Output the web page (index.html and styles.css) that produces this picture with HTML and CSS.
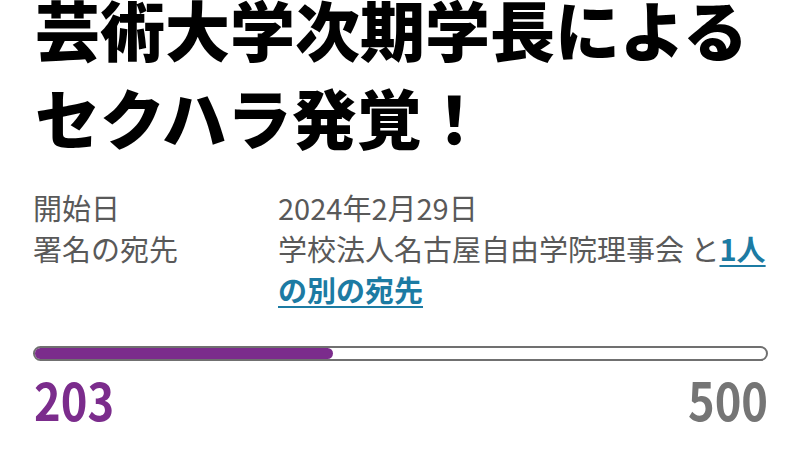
FILE: index.html
```html
<!DOCTYPE html>
<html lang="ja">
<head>
<meta charset="utf-8">
<title>芸術大学次期学長によるセクハラ発覚！</title>
<link rel="stylesheet" href="styles.css">
</head>
<body>
<main class="page">
  <h1 class="title">芸術大学次期学長によるセクハラ発覚！</h1>
  <dl class="info">
    <dt class="label">開始日</dt>
    <dd class="value">2024年2月29日</dd>
    <dt class="label">署名の宛先</dt>
    <dd class="value">学校法人名古屋自由学院理事会 と<a class="link" href="#">1人の別の宛先</a></dd>
  </dl>
  <div class="progress"><div class="progress-fill" style="width:40.8%"></div></div>
  <div class="counts">
    <span class="count-now">203</span>
    <span class="count-goal">500</span>
  </div>
</main>
</body>
</html>
```

FILE: styles.css
```css
html, body {
  margin: 0;
  padding: 0;
  background: #ffffff;
}
body {
  font-family: "Noto Sans CJK JP", "Noto Sans", sans-serif;
  overflow: hidden;
}
.page {
  width: 800px;
  height: 450px;
  box-sizing: border-box;
  padding: 0 32px 0 33px;
}
.title {
  margin: -16px 0 0 2px;
  font-size: 65px;
  line-height: 88px;
  font-weight: 900;
  color: #000000;
}
.info {
  display: grid;
  grid-template-columns: 245px 1fr;
  margin: 27px 0 0 0;
  font-size: 29px;
  line-height: 41px;
  color: #595959;
}
.label {
  margin: 0;
}
.value {
  margin: 0;
}
.link {
  color: #1c7ba3;
  font-weight: 700;
  text-decoration: underline;
  text-decoration-thickness: 2px;
  text-underline-offset: 4px;
}
.progress {
  margin-top: 36px;
  height: 15px;
  box-sizing: border-box;
  border: 2px solid #707070;
  border-radius: 8px;
  overflow: hidden;
  background: #ffffff;
}
.progress-fill {
  height: 100%;
  background: #7b2c8c;
  border-radius: 0 8px 8px 0;
}
.counts {
  display: flex;
  justify-content: space-between;
  margin-top: 12px;
  font-size: 52px;
  line-height: 52px;
  font-weight: 700;
}
.count-now {
  display: inline-block;
  color: #7b2c8c;
  margin-left: 1px;
  transform: scaleX(0.87);
  transform-origin: left center;
}
.count-goal {
  display: inline-block;
  color: #757575;
  transform: scaleX(0.87);
  transform-origin: right center;
}
```
